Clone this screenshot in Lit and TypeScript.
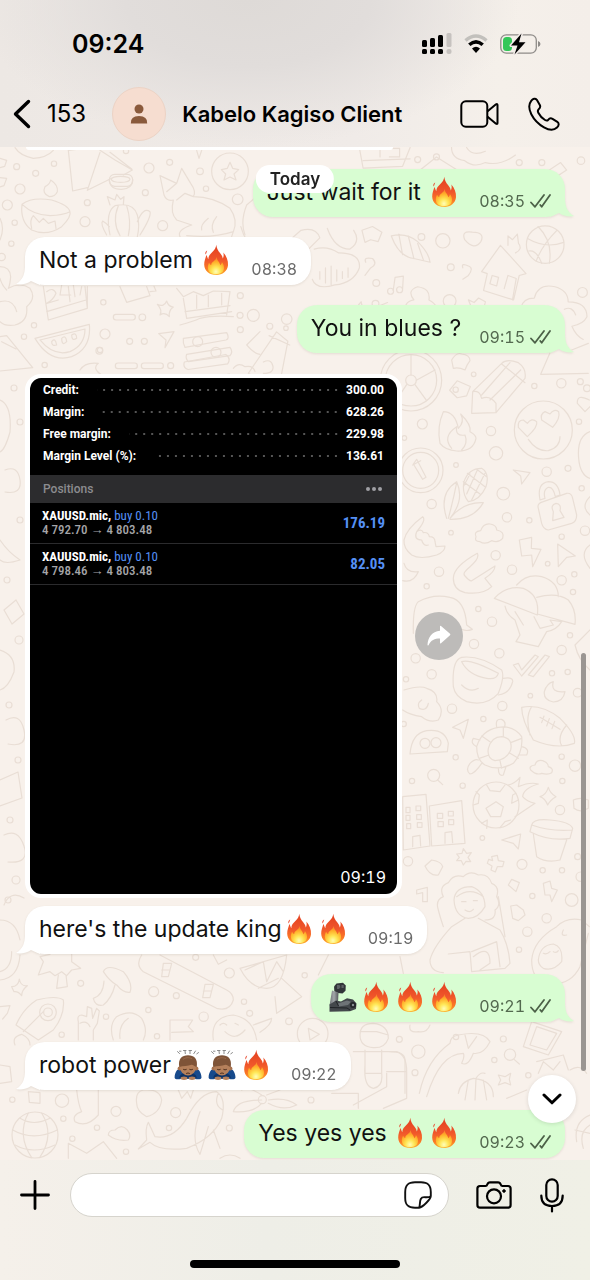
import { LitElement, html, svg, css, nothing } from "lit";
import { customElement, property } from "lit/decorators.js";

type Part = string | { emoji: string };
interface Message {
  out: boolean;
  time: string;
  parts: Part[];
  continued?: boolean;
}

const fire = { emoji: "fire" };
const arm = { emoji: "arm" };
const bow = { emoji: "bow" };

const before: Message[] = [
  { out: true, time: "08:35", parts: ["Just wait for it ", fire] },
  { out: false, time: "08:38", parts: ["Not a problem ", fire] },
  { out: true, time: "09:15", parts: ["You in blues ?"] },
];
const after: Message[] = [
  { out: false, time: "09:19", parts: ["here's the update king", fire, fire] },
  { out: true, time: "09:21", parts: [arm, fire, fire, fire] },
  { out: false, time: "09:22", parts: ["robot power", bow, bow, fire] },
  { out: true, time: "09:23", parts: ["Yes yes yes ", fire, fire], continued: true },
];

const emojiArt: Record<string, { label: string; art: unknown }> = {
  fire: {
    label: "fire",
    art: svg`
      <defs>
        <linearGradient id="outer" x1="0" y1="0" x2="0" y2="1">
          <stop offset="0" stop-color="#e2401f" /><stop offset=".5" stop-color="#f0562b" />
          <stop offset=".8" stop-color="#fb7a25" /><stop offset="1" stop-color="#fdb32c" />
        </linearGradient>
        <radialGradient id="inner" cx=".5" cy=".85" r=".75">
          <stop offset="0" stop-color="#fffdb8" /><stop offset=".35" stop-color="#ffe757" />
          <stop offset=".75" stop-color="#ffb02a" /><stop offset="1" stop-color="#fb8a2a" />
        </radialGradient>
      </defs>
      <path fill="url(#outer)" d="M17.3 .8C17.6 4.500 19 6.500 21 9C22.600 11 23.600 12.500 23.700 14.600C24.800 13 24.900 10.500 24.300 8.500C27.500 12 29.300 16.500 29 21.300C28.500 27 23.700 31 17.300 31C10.500 31 5.400 27.300 5.200 20.800C5.100 17 6.700 14 7.300 11C8.300 12.500 8.500 14 9.300 15.200C9.300 12 11.300 10 13.600 7.800C15.600 5.800 17 3.800 17.300 .8Z" />
      <path fill="#e8442b" d="M8.200 6.500C6.400 7.500 5.900 9.100 6.700 10.400C7.500 9.200 7.600 7.900 8.200 6.500Z" />
      <path fill="url(#inner)" d="M17.700 13C18 17 20.600 17.600 21.300 21.200C22.300 20.500 22.800 19.400 22.900 18C25.300 21 26 25.500 23.300 28.300C20 30.900 13.800 30.900 10.700 28.200C8.200 25.500 8.500 21.500 10.100 18.700C10.600 19.900 11.300 20.700 12.200 21C12.300 17.500 17 17 17.700 13Z" />`,
  },
  arm: {
    label: "mechanical arm",
    art: svg`
      <defs>
        <linearGradient id="metal" x1="0" y1="0" x2="1" y2="0">
          <stop offset="0" stop-color="#6c7073" /><stop offset=".5" stop-color="#a3a7aa" /><stop offset="1" stop-color="#54585b" />
        </linearGradient>
      </defs>
      <path fill="#323539" d="M9 5.500L11.500 2.600L18 1.800L20.800 4.500L20.500 9.800L17.500 12.400L13 12L9.400 10.500Z" />
      <path fill="#5d6165" d="M12 4h2.500l1 2-1.500 2h-2zM16.500 4h2.200v3h-2.200z" />
      <path fill="url(#metal)" d="M7 9.500L13.500 11.500L13 21.500L4.500 24.500Z" />
      <path fill="#43474b" d="M4.500 23.500L11 19.500L16 20.500L22 17.300L28 18.500L31.500 22.500L31 28L25 30.300L4.500 30.800Z" />
      <path fill="#6e7377" d="M13 22.500L22 19.600L26 20.800L23 24L14 25.500Z" />
      <circle cx="28" cy="24" r="3" fill="#23262a" /><circle cx="28" cy="24" r="1.200" fill="#8a8f93" />
      <path fill="none" stroke="#202326" stroke-width="1" d="M5 26.500L22 27L25 29M11 20L13.500 25" />`,
  },
  bow: {
    label: "person bowing",
    art: svg`
      <path fill="none" stroke="#8b8b8b" stroke-width="1" stroke-linecap="round" d="M8.500 4.500L6.500 2.600M8.500 2.200L10 2.200M14 1.800L14.300 4.600M12.500 1.500H15M19 1.800L19 4.600M18 1.500H20.500M24.500 2L22.800 4.600M27.500 3.600L25.800 4.800" />
      <path fill="#174a8c" d="M3.600 28.500C3.800 22.500 7 18.700 12 18.500H22C27 18.700 30.200 22.500 30.500 28.500C30.500 30.300 27.500 30.800 24 30H10C6.500 30.800 3.600 30.300 3.600 28.500Z" />
      <path fill="#0e3265" d="M8 28.800C9.500 25 12 23.800 17 23.800S24.500 25 26 28.800Z" />
      <circle cx="8.600" cy="19.500" r="2" fill="#a87350" /><circle cx="25.400" cy="19.500" r="2" fill="#a87350" />
      <ellipse cx="17" cy="17.300" rx="8.300" ry="9.200" fill="#b5805b" />
      <path fill="#7f5438" d="M8.300 18C6.800 10 11 6.300 17 6.300S27.200 10 25.700 18C23.500 17.600 22.500 16 20.500 15.800C17 17.500 12 16.500 8.300 18Z" />
      <path fill="none" stroke="#9a6a4a" stroke-width="1" d="M12 10.500C14 8.500 18 8 21 9.800" />
      <path fill="none" stroke="#4d2f1e" stroke-width="1" stroke-linecap="round" d="M12.500 20.500Q14 21.500 15.300 20.500M18.700 20.500Q20 21.500 21.500 20.500M15.500 24.300Q17 23.500 18.500 24.300" />
      <ellipse cx="13" cy="29.300" rx="3.400" ry="1.700" fill="#b5805b" /><ellipse cx="21" cy="29.300" rx="3.400" ry="1.700" fill="#b5805b" />`,
  },
};

@customElement("emoji-glyph")
export class EmojiGlyph extends LitElement {
  @property() name = "fire";
  static styles = css`
    :host { display: block; width: 34px; height: 32px; }
    svg { display: block; width: 100%; height: 100%; }
  `;
  render() {
    const e = emojiArt[this.name];
    return html`<svg viewBox="0 0 34 32" role="img" aria-label=${e.label}>${e.art}</svg>`;
  }
}

@customElement("chat-wallpaper")
export class ChatWallpaper extends LitElement {
  static styles = css`
    :host { display: block; }
    svg { display: block; width: 100%; height: 100%; fill: none; stroke: #e9ded5; stroke-linecap: round; stroke-linejoin: round; }
  `;
  private dots(list: number[][]) {
    return list.map(([x, y, r]) => svg`<circle cx=${x} cy=${y} r=${r} />`);
  }
  render() {
    return html`<svg viewBox="0 147 590 1013" preserveAspectRatio="xMidYMin slice" aria-hidden="true">
      <g transform="translate(0 145) scale(.33333)" stroke-width="3.600">
        ${this.dots([
          [50, 65, 9], [107, 85, 9], [162, 56, 8], [60, 132, 15], [22, 180, 15], [44, 233, 8], [262, 173, 9], [255, 230, 15], [447, 69, 15], [436, 143, 9],
          [509, 52, 9], [600, 79, 10], [618, 131, 8], [713, 163, 16], [488, 242, 15], [34, 296, 8], [5, 336, 11], [310, 472, 8], [427, 517, 10], [102, 541, 8],
          [72, 575, 8], [315, 567, 15], [389, 589, 9], [433, 589, 9], [300, 615, 8], [134, 660, 8], [512, 662, 9], [721, 452, 9], [760, 511, 18], [721, 554, 9], [378, 18, 8],
        ])}
        <path d="M45 8Q60 32 100 40Q140 38 160 16M205 16L218 138L262 128M205 16L240 12M262 136L300 22M262 136L335 100M300 16L345 45L397 75L370 90M330 22L395 72" />
        <rect x="328" y="88" width="70" height="36" rx="16" /><ellipse cx="362" cy="103" rx="28" ry="9" /><path d="M328 104Q330 134 365 133Q398 130 398 104" />
        <circle cx="690" cy="79" r="55" /><path d="M690 52L698 70L716 74L702 87L708 105L690 96L672 105L677 87L664 74L682 70Z" />
        <path d="M66 178Q60 230 95 255Q140 275 185 245Q215 215 210 200Q205 180 155 165Q95 155 66 178ZM66 178Q100 210 150 212Q190 210 210 200M148 155Q125 145 135 125Q150 118 152 105Q175 120 172 140Q165 155 148 155M95 250Q88 225 100 212L118 232L130 220L145 235L165 228L168 250" />
        <path d="M330 270Q315 200 345 182Q400 170 412 210Q420 240 412 275M355 182Q335 230 360 272M380 182Q395 230 385 272M320 270Q300 235 308 228Q320 235 328 245M412 230Q430 185 450 200Q455 215 420 270M330 180L322 155L345 165L350 148L362 163L372 155L370 178" />
        <path d="M480 92L530 115L545 70L572 115Q590 140 580 155Q640 155 690 190Q715 225 700 260L695 275M480 92L492 150Q500 170 520 165Q510 205 530 225L575 240Q530 255 540 275M530 115L500 140M580 155L555 145L530 165M625 220Q600 240 605 255M650 215Q630 240 640 262M700 260Q640 280 560 272" />
        <path d="M775 150L740 180Q720 230 735 270M0 220Q15 250 0 285M0 40L20 46L14 64L0 68M0 98L20 100L12 122L0 126M590 16L597 40L605 16" />
        <path d="M0 365Q30 365 32 395Q30 420 25 430Q60 410 90 430Q110 460 80 485Q85 530 45 540Q15 545 0 530M0 470Q40 460 50 500M20 435Q5 420 0 400" />
        <path d="M130 425L145 525L262 490V425M140 500L258 465M255 425L262 490M140 440Q160 425 168 445Q160 465 140 475L175 465M185 420L180 450L212 450M205 425L210 470M220 420L225 455M245 425L240 450" />
        <path d="M360 425L380 472L450 452L440 425M450 440L468 438L462 424M472 478Q492 488 500 468Q505 485 520 486Q505 497 508 515Q495 500 480 510Q488 495 472 478Z" />
        <path d="M530 430L550 455L580 440L610 452L640 438L690 440M550 460L560 520M690 440L680 510M555 500L690 482M560 520L695 500M540 540Q580 530 600 520Q640 510 700 515M590 450V490M625 450V485M665 445V480" />
        <rect x="340" y="508" width="66" height="17" rx="8" /><rect x="346" y="654" width="66" height="17" rx="8" /><rect x="424" y="654" width="66" height="17" rx="8" />
        <path d="M105 580L268 538Q275 610 215 635Q150 655 105 580ZM120 585L255 552Q255 600 210 620Q160 635 120 585M155 590Q165 575 170 600Q155 605 155 590M185 580Q198 568 200 590Q185 605 185 580M215 570Q230 560 230 580Q215 590 215 570M0 575L20 572L98 668L0 678M5 590Q25 600 48 612" />
        <path d="M476 566L522 560L495 608L498 585ZM550 580L680 563Q690 580 678 585L555 607Q548 595 550 580M560 628L690 607Q700 620 690 632L565 650Q555 640 560 628" /><circle cx="593" cy="590" r="15" /><circle cx="648" cy="622" r="15" />
        <path d="M240 675Q255 650 295 655Q275 670 305 690M780 560L740 600Q760 625 780 628M700 670Q715 650 735 665Q760 660 765 680" />
      </g>
      <g transform="translate(0 140) scale(.37627)" stroke-width="3.200">
        ${this.dots([
          [1110, 52, 8], [1160, 45, 8], [1380, 60, 8], [1410, 103, 14], [1440, 60, 8], [1544, 55, 10], [1120, 258, 9], [1177, 268, 19], [1198, 338, 9], [1195, 428, 17],
          [1548, 405, 13], [1000, 380, 9], [998, 435, 9], [876, 461, 8], [762, 476, 14], [717, 495, 8], [638, 466, 8], [1480, 470, 9], [264, 560, 9], [470, 670, 9], [760, 500, 6], [1560, 660, 9],
        ])}
        <path d="M955 20L965 75L1070 70L1090 20M965 55L1090 50M1010 20V45M1040 22H1062V45H1035M1110 85L1160 45L1215 80M1200 20Q1200 50 1235 55Q1260 75 1290 60Q1330 70 1370 40M1240 20Q1255 45 1290 30M1475 100L1460 80L1490 60L1506 80ZM640 230Q660 300 720 310L800 240Q840 230 850 260L790 320M870 235Q890 290 930 290Q960 270 940 240" />
        <path d="M1040 255Q1080 245 1110 270Q1140 300 1143 325L1100 315Q1060 310 1040 255M1060 250L1070 305M1085 255L1100 315M1110 275L1125 318M835 290Q870 280 900 300Q960 300 955 340Q940 380 890 385Q840 400 830 370M850 350V370M865 340V380M880 335V385M895 345V375M910 350V368M925 340V365" />
        <path d="M1235 265Q1225 240 1255 245Q1290 245 1278 270Q1260 295 1235 265M962 240L990 230L1015 245L1005 270L985 265L970 272Z" />
        <path d="M1280 350L1330 280L1398 355L1380 360L1365 425L1285 400L1295 355ZM1340 395L1350 360L1372 368L1362 425M1308 360L1325 365L1320 388L1302 382ZM1350 280L1350 255L1362 265L1375 250L1378 275Q1390 290 1370 300" />
        <circle cx="1449" cy="278" r="50" /><path d="M1402 262Q1450 290 1498 272M1430 230Q1470 270 1460 327M1480 240Q1440 280 1425 322M1405 295Q1425 290 1440 328" />
        <path d="M972 325Q965 310 990 315Q1005 330 985 340L970 360M1045 400L1050 365L1072 362L1070 395M1230 340Q1225 325 1245 335Q1260 340 1245 360L1230 370" /><circle cx="1038" cy="402" r="8" /><circle cx="1062" cy="398" r="8" />
        <path d="M1245 425L1260 432L1272 420L1290 430L1285 450L1293 465L1275 470L1262 460L1250 470L1255 450ZM1080 460Q1070 430 1100 425Q1080 400 1110 390Q1145 395 1140 425Q1170 440 1155 465Q1140 500 1110 480Q1080 500 1080 460ZM950 475Q940 450 960 430L965 455L990 450L985 475Q970 495 950 475M1010 475V440L1030 432M1385 445Q1390 420 1420 420Q1430 380 1475 390Q1510 400 1510 430Q1560 430 1560 470Q1550 490 1520 495Q1530 520 1550 530M1385 445Q1400 490 1440 480M1500 450Q1520 440 1530 465" />
        <path d="M660 620L735 510L765 535L740 665ZM800 480Q830 480 835 500M715 520L770 545M700 590Q720 580 725 600T700 620M490 590L600 570Q615 580 605 595L500 610Q485 605 490 590M500 640L610 622Q620 640 608 650L510 665Q495 655 500 640" />
        <path d="M1195 665L1215 640L1250 655L1240 680L1215 685Z" /><rect x="308" y="668" width="56" height="16" rx="8" /><rect x="374" y="668" width="56" height="16" rx="8" />
      </g>
      <g transform="translate(390 340) scale(.33333)" stroke-width="3.600">
        ${this.dots([
          [97, 252, 15], [197, 149, 8], [251, 103, 7], [303, 273, 14], [318, 340, 20], [433, 138, 8], [514, 130, 14], [571, 125, 9], [567, 245, 8], [43, 294, 7], [198, 375, 7],
          [470, 395, 14], [534, 385, 9], [340, 461, 19], [575, 445, 8], [125, 492, 14], [351, 532, 14], [418, 541, 8], [183, 578, 7], [585, 572, 14], [515, 590, 8], [317, 646, 14],
          [366, 689, 14], [473, 671, 7], [147, 695, 14], [110, 739, 8], [515, 721, 14], [553, 703, 8], [549, 756, 8], [265, 807, 8], [306, 845, 14], [252, 912, 14], [328, 940, 14],
          [540, 886, 8], [515, 930, 14], [77, 955, 14], [125, 1003, 14], [48, 1018, 8], [486, 1000, 8], [533, 996, 8], [421, 1067, 7], [186, 1106, 14], [337, 1098, 14], [280, 1137, 8], [563, 1058, 13],
        ])}
        <circle cx="63" cy="121" r="92" /><circle cx="63" cy="121" r="77" /><circle cx="63" cy="121" r="16" /><path d="M63 105V44M79 121L135 90M75 134L110 182M50 134L18 182" />
        <path d="M185 60Q200 35 215 42Q240 45 240 62Q230 75 225 90Q205 80 190 85Z" />
        <path d="M248 155L335 70Q350 55 385 68Q410 85 405 115L318 218L245 220ZM248 155Q270 150 275 175Q300 165 318 190L318 218M275 165L360 68M300 180L392 90M335 72L405 128" />
        <path d="M150 310Q140 260 160 215Q195 215 205 265Q225 245 212 222Q245 255 240 275Q258 285 258 295Q250 335 200 333Q165 330 150 310ZM185 325Q155 290 200 260Q195 290 225 285Q235 310 215 330" />
        <circle cx="460" cy="270" r="87" /><path d="M412 290L385 262Q382 240 400 240L412 250Q425 232 440 245Q445 260 412 290ZM488 262L455 240Q450 222 465 215L480 222Q492 205 506 215Q512 235 488 262ZM415 298Q440 335 475 332Q510 322 510 290" />
        <circle cx="92" cy="391" r="67" /><circle cx="92" cy="391" r="54" /><path d="M80 358L108 412L98 418L70 372ZM68 375L92 362" />
        <path d="M595 100L452 103L480 38M595 10L545 30M598 180Q560 160 562 190L585 215L600 200M600 275Q560 290 566 355Q570 405 600 415" />
        <path d="M170 535Q145 460 200 425Q225 480 180 535Q220 485 280 488Q250 540 180 538M175 535Q190 480 200 428M222 425Q235 385 275 385Q300 400 288 440Q270 480 235 485Q215 460 222 425M232 400L285 440M220 425L270 462M260 388L290 410M245 480L285 400M230 462L262 390M220 440L240 402" />
        <path d="M370 390L420 398L395 432L392 408ZM450 480Q440 430 475 425Q505 425 510 465L496 470Q490 440 475 442Q458 450 465 475ZM445 505Q440 490 460 485L530 460Q545 458 548 475L560 525Q560 545 545 550L475 570Q460 568 455 550ZM490 515Q480 495 498 490Q515 492 510 512L522 532L488 542ZM600 470Q570 500 600 525" />
        <path d="M42 600Q50 565 98 530Q110 540 80 575Q95 565 100 578Q115 575 118 590Q135 590 135 605L138 620L165 618Q165 635 140 645Q90 660 65 645Q40 625 42 600M80 575Q70 600 95 600Q100 620 115 615M258 590Q250 575 272 572Q280 550 300 552Q320 555 320 570Q345 575 338 595Q325 610 305 602Q285 615 270 605Q252 605 258 590Z" />
        <path d="M190 715Q190 680 262 640Q270 655 240 680Q215 700 225 708Q240 725 245 722L315 678Q315 695 285 715L305 740Q280 765 225 758Q190 750 190 715M388 600L425 592L424 625L453 628L428 680L425 645L395 648ZM503 612L556 648L530 652L505 680ZM600 615Q565 640 600 685" />
        <path d="M313 775Q350 735 400 745Q450 765 442 825ZM380 735Q410 700 455 710Q505 725 505 770M440 772Q500 755 535 780Q560 810 555 853L442 822M345 798Q350 825 375 840L390 885L378 905L445 920L470 875Q500 870 515 845L480 840L490 855L450 865L432 830M375 815L400 855" />
        <path d="M42 670Q50 700 85 695Q70 730 38 722M70 880Q68 800 85 785Q130 760 180 772Q225 780 230 855L247 868Q230 875 215 868" />
        <path d="M190 1040Q185 960 215 952Q270 945 335 990Q345 1010 325 1060Q290 1100 230 1085Q195 1070 190 1040ZM215 965Q240 955 325 1000Q320 1020 290 1015Q235 1005 215 965M340 1015Q370 1010 368 1025Q360 1060 325 1065M215 1035Q240 1060 265 1045" /><path d="M370 975L385 970L395 990L435 945L445 950L395 1008ZM415 1005L465 945L478 950L430 1010ZM600 870L555 915Q565 960 600 990" />
        <path d="M490 1025Q480 1060 525 1055Q520 1085 490 1086Q460 1080 463 1055Q470 1030 490 1025ZM42 1050Q90 1035 110 1045Q145 1055 140 1085Q165 1110 145 1140Q120 1150 95 1130Q60 1125 38 1110M95 1080Q80 1090 88 1105Q110 1115 115 1090" />
      </g>
      <g transform="translate(390 700) scale(.33333)" stroke-width="3.600">
        ${this.dots([
          [41, 72, 8], [197, 172, 8], [66, 243, 8], [218, 257, 8], [515, 170, 8], [555, 197, 17], [517, 243, 8], [510, 330, 14], [277, 414, 7], [54, 484, 14], [396, 493, 15], [458, 511, 8],
          [516, 511, 8], [563, 470, 9], [427, 588, 8], [545, 600, 19], [470, 655, 14], [412, 695, 14], [387, 749, 8], [28, 1018, 9], [85, 1055, 20], [198, 1011, 8], [340, 1017, 9], [313, 1080, 8], [75, 1118, 9], [415, 1126, 8], [572, 530, 14],
        ])}
        <path d="M188 82L235 58L220 115L210 90ZM60 162Q65 100 110 92Q165 85 175 130L172 155ZM395 22Q455 10 510 55Q560 105 553 130Q500 150 430 120Q395 60 395 22M425 20Q405 50 420 105M530 75Q500 110 515 137M450 52L510 88M462 48L455 68M478 56L470 78M494 64L486 86" /><circle cx="105" cy="130" r="15" /><circle cx="138" cy="128" r="15" />
        <path d="M260 140Q275 90 325 82Q370 75 395 110Q400 155 370 190Q325 215 285 195Q260 180 260 140M295 145Q305 110 335 110Q370 115 362 150Q350 180 315 182Q290 175 295 145M300 125L275 108M340 110V82M362 128L395 115M360 160L385 175M330 182L335 205M297 165L268 175M320 80Q315 55 335 58Q350 65 343 82M395 140Q420 145 410 165L385 165M325 205Q325 230 340 225L348 200M275 190Q255 220 240 222Q225 210 240 190Q255 175 265 180M260 140Q240 130 250 115L270 120" />
        <circle cx="131" cy="226" r="18" /><path d="M143 240L158 254M422 210Q415 198 435 195Q440 178 458 182Q475 188 475 200Q492 205 485 218Q475 225 455 220Q440 227 422 210Z" />
        <circle cx="318" cy="315" r="69" /><path d="M318 305L340 320L332 350H302L288 325ZM290 255L300 272L330 275L345 255M250 315L265 310L268 285L258 275M385 300L365 310L368 285L378 280M275 370L292 360L290 385M330 383L345 365L362 360M355 255Q375 250 390 232L385 260Q420 245 445 252Q400 265 398 290Q410 305 435 310L375 350M450 290Q468 285 475 262Q480 280 498 290Q480 300 473 315Q465 295 450 290Z" />
        <path d="M40 450L38 290L108 283L120 438ZM125 438L118 318L215 302L225 430ZM68 440V410L90 406L92 438M165 430V398L185 395L188 428" />
        <path d="M48 322H60V338H48ZM78 318H92V332H78ZM48 346H60V361H48ZM80 344H94V358H80ZM50 371H62V386H50ZM82 368H96V382H82ZM142 340H158V355H142ZM175 334H190V348H175ZM144 365H160V380H144ZM176 359H191V374H176Z" />
        <path d="M425 375Q430 355 480 360Q540 365 548 385L540 415Q480 425 420 395ZM425 375Q480 395 547 390M430 402L440 470Q470 490 510 480L530 420M335 420L392 402L385 447L370 430ZM550 300Q570 290 595 300V325Q570 340 552 325Z" />
        <path d="M200 462L216 460L220 446L230 460L244 458L234 472L242 485L228 484L220 495L214 482L200 482L208 472ZM305 470L322 466L325 482L342 485L338 500L322 500L316 516L303 510L306 498L292 490L296 478L308 482ZM105 498L125 480Q155 485 158 500L145 525Q120 530 105 498M355 555L365 538L388 548L378 575ZM460 550L480 543L485 565L502 570L485 605L480 585L465 585ZM362 618L380 615L400 630L405 645L385 662L368 655ZM80 570L112 562L112 605H98V578L80 582Z" />
        <path d="M160 680Q150 650 145 630Q135 600 160 590Q145 560 175 548Q190 520 220 530Q240 510 265 525Q295 520 305 550Q330 560 320 590Q335 615 315 630Q320 660 285 660M192 600Q195 560 245 560Q285 575 285 620Q265 655 235 655Q195 650 192 600ZM200 590Q240 560 280 590M215 605H228M250 602H262M225 630Q240 640 250 628M120 780Q130 740 185 680L225 655M265 655L330 690Q355 730 360 790L345 805L245 815L240 755L175 762M325 590L345 710M245 755L320 725L330 800M250 770Q300 730 300 790L270 810M120 780Q120 815 160 818" />
        <path d="M425 780Q430 720 500 680Q530 650 575 660L598 680M425 780Q425 840 470 850M595 700L570 800Q540 860 470 850M445 780Q450 735 490 732Q520 740 515 785Q490 815 460 805Q445 795 445 780M460 760Q470 765 480 755M490 755Q500 760 505 752M520 690Q510 710 530 705M40 730L30 650M30 770L40 820" />
        <path d="M88 1180Q110 1080 180 1030Q180 1010 205 1005Q280 990 300 1025Q280 1065 250 1060Q235 1100 215 1090Q225 1070 220 1060Q150 1060 110 1190M225 1005L235 1045L260 1010M60 975Q55 1000 85 995Q110 1000 120 975M400 1040L425 965L515 995L475 1065ZM420 1035L440 980L500 1000L470 1050ZM440 1085L520 1065L535 1110M445 1120L460 1085L490 1110L510 1085" /><circle cx="360" cy="1064" r="17" /><path d="M372 1078L388 1092" />
        <path d="M205 1180Q210 1145 250 1135Q310 1140 310 1190M235 1140L225 1200M258 1135L255 1200M280 1140L290 1200M258 1135Q270 1115 285 1120M325 1125L345 1130L362 1120L358 1138L362 1155L345 1148L325 1155L332 1140ZM0 1055Q45 1055 45 1080V1180M540 1110Q570 1090 590 1120" />
      </g>
      <g transform="translate(0 945) scale(.33333)" stroke-width="3.600">
        ${this.dots([
          [242, 115, 9], [318, 215, 8], [461, 140, 15], [445, 195, 8], [529, 152, 9], [587, 37, 9], [688, 84, 15], [732, 170, 8], [749, 205, 9], [914, 91, 8], [867, 229, 10], [611, 215, 14],
          [185, 269, 8], [471, 274, 8], [37, 464, 8], [186, 467, 20], [190, 521, 8], [291, 548, 8], [217, 581, 8], [348, 499, 15], [527, 503, 15], [507, 549, 8], [378, 620, 8], [688, 549, 9], [933, 465, 9],
        ])}
        <path d="M0 105Q55 100 60 30M0 80Q35 70 35 20M35 125Q55 125 58 102Q62 125 82 122Q65 135 65 152Q55 138 42 140ZM115 90L130 50L120 35L150 28M115 90L150 80L165 92L185 80L200 92L215 75L242 70L215 50L215 28M175 90L170 130L202 125L198 90M310 80Q320 55 370 80Q400 115 390 142Q370 145 350 120Q330 110 310 80ZM312 108Q310 150 280 160Q285 185 310 180Q335 160 345 120" />
        <path d="M425 30Q405 60 430 80L650 190Q690 200 700 165Q700 145 680 135L480 30M490 55H515L505 95H485ZM615 118H640L630 158H608ZM485 75H510M610 138H635M720 70L860 30M720 70Q750 130 800 130Q850 130 860 30M735 75L790 50L800 110L830 50L850 80M775 130L835 100M845 100L905 155L830 205L825 155M640 30L655 58L680 45M985 30L955 90" />
        <path d="M48 240Q70 190 110 165Q170 150 190 165Q195 210 160 255L115 285ZM70 260L130 200" /><circle cx="144" cy="202" r="25" /><circle cx="144" cy="202" r="13" />
        <path d="M0 185L30 182L22 205L8 222M45 300Q35 275 65 268Q90 280 90 300M235 285V230Q230 210 245 210L260 215L262 185L275 190L278 220L290 190L298 198L292 235L280 255V285M240 235Q260 225 270 245M510 285V225H578L565 245L580 260L515 262M340 285Q325 240 350 215Q395 190 425 220Q445 255 430 285M360 280Q355 240 385 220M640 285Q630 215 700 210Q760 220 770 285M660 240Q670 230 680 240M705 235L715 240M675 260Q705 290 735 255M760 240L815 220Q815 240 780 262" />
        <circle cx="938" cy="266" r="46" /><path d="M925 250L958 268L930 285Z" /><path d="M0 360L30 365L35 410L0 415M85 440L120 443V475L88 472ZM230 435Q235 480 245 500Q215 510 225 530Q260 550 295 510V435M410 475Q405 440 430 435Q480 430 485 465Q480 505 440 515Q410 500 410 475M535 435L545 460L562 440L572 460L580 435M325 570Q325 555 345 555Q365 535 382 555Q395 570 385 585Q350 590 325 570Z" />
        <circle cx="105" cy="570" r="69" /><path d="M38 555Q100 590 172 555M45 600Q100 630 165 600M85 504Q50 570 95 638M125 504Q165 570 120 636M60 520Q100 545 150 520" /><path d="M415 612L440 585Q435 550 445 532L465 575Q520 585 560 520Q600 440 650 440Q680 460 665 520Q640 580 560 610Q480 620 450 592ZM600 500Q570 580 600 628L625 545M640 555L660 610M655 445Q640 480 668 495M205 640V595L260 625L310 590L350 640M660 640Q690 620 720 640" />
        <path d="M785 450Q740 420 725 435M785 465Q710 465 700 500Q760 505 785 475M800 450L840 435M805 465Q860 455 890 480Q850 500 805 475" /><circle cx="787" cy="464" r="12" />
      </g>
      <g transform="translate(320 1015) scale(.33333)" stroke-width="3.600">
        <path d="M120 60Q120 25 160 25Q205 30 205 70Q195 100 160 98Q120 95 120 60M120 50L170 50L205 60M100 110H230Q260 120 260 170V250L190 280M135 105V175H185V105M135 150Q130 215 160 220Q190 215 185 175M35 235H115V280M100 270L200 215V175M200 170H260M560 250L620 225M770 380Q760 320 810 300M765 345L810 355M790 400Q775 350 810 330" />
      </g>
      <g stroke-width="1.200">
        <path d="M0 400Q12 405 10 432Q5 450 0 452M5 470Q18 465 20 480T5 492M0 540Q8 552 20 560Q5 565 0 560M4 610L16 600L24 614L12 624ZM0 650Q16 655 14 672Q8 688 0 690M6 720Q20 712 24 730T8 744M0 780L18 772L22 798L0 806M4 835Q18 828 24 846T8 862" />
        ${this.dots([[14, 388, 3], [20, 520, 3], [7, 580, 3], [19, 640, 4], [9, 705, 3], [18, 760, 3], [10, 820, 3], [16, 880, 4], [8, 900, 3], [20, 422, 3]])}
        <path d="M0 920Q16 920 20 940M4 905Q10 890 24 898" />
      </g>
    </svg>`;
  }
}

@customElement("chat-bubble")
export class ChatBubble extends LitElement {
  @property({ attribute: false }) message!: Message;
  static styles = css`
    :host { display: flex; }
    .bubble {
      position: relative; display: flex; align-items: center; gap: 18px; box-sizing: border-box;
      min-height: 48px; padding: 0 14px; border-radius: 20px; background: #fff; color: #111;
      filter: drop-shadow(0 1px 1px rgba(90, 70, 50, 0.12));
    }
    .out { margin-left: auto; background: #d8fdd2; }
    .text { display: flex; align-items: center; flex-wrap: wrap; padding-bottom: 2px; font-size: 23px; line-height: 44px; white-space: pre-wrap; }
    .meta { display: flex; align-items: center; gap: 5px; align-self: flex-end; font-size: 16px; font-variant-numeric: tabular-nums; line-height: 20px; padding-bottom: 6px; color: #6b6b6b; }
    .out .meta { color: #53694f; }
    .ticks { width: 21px; height: 14px; }
    .tail { position: absolute; bottom: 0; left: -9px; width: 24px; height: 20px; fill: #fff; }
    .out .tail { left: auto; right: -9px; fill: #d8fdd2; transform: scaleX(-1); }
  `;
  render() {
    const m = this.message;
    return html`<div class="bubble ${m.out ? "out" : ""}">
      ${m.continued ? nothing : html`<svg class="tail" viewBox="0 0 24 20" aria-hidden="true"><path d="M9 0C9 9 7 15 0 19C5 20 11 19 15 16L24 20V0Z" /></svg>`}
      <span class="text">${m.parts.map((p) => (typeof p === "string" ? html`<span>${p}</span>` : html`<emoji-glyph name=${p.emoji}></emoji-glyph>`))}</span>
      <span class="meta"><time>${m.time}</time>${m.out
        ? html`<svg class="ticks" viewBox="0 0 21 14" fill="none" stroke="#4c6148" stroke-width="1.800" stroke-linecap="round" stroke-linejoin="round" role="img" aria-label="Delivered"><path d="M1 8.500L5 12.800L14 1M10.300 11L11.700 12.800L20 1" /></svg>`
        : nothing}</span>
    </div>`;
  }
}

@customElement("trade-card")
export class TradeCard extends LitElement {
  static styles = css`
    :host { display: block; }
    .card { display: flex; flex-direction: column; box-sizing: border-box; min-height: 524px; border: solid #fff; border-width: 4px 5px; border-radius: 16px; background: #000; color: #fff; font-family: Roboto, "Liberation Sans", sans-serif; overflow: hidden; }
    .summary { margin: 0; padding: 1px 0 8px; }
    .row { display: flex; align-items: center; padding: 0 13px; font-size: 12px; line-height: 22px; font-weight: 700; }
    .row dd { margin: 0; }
    .leader { flex: 1; height: 2px; margin: 0 6px 0 18px; background: radial-gradient(circle, #555 1px, transparent 1px) right center / 8px 2px repeat-x; }
    .bar { display: flex; justify-content: space-between; align-items: center; padding: 0 15px 0 13px; height: 28px; background: #2c2c2e; color: #8c8c90; }
    h2 { margin: 0; font-size: 12px; font-weight: 500; }
    .more { display: flex; border: 0; padding: 0; background: none; }
    ul { margin: 0; padding: 0; list-style: none; }
    li { display: flex; align-items: center; justify-content: space-between; box-sizing: border-box; height: 41px; padding: 0 12px; border-bottom: 1px solid #2b2b2d; font-size: 13px; line-height: 14px; font-family: "Roboto Condensed", Roboto, sans-serif; }
    .buy, .profit { color: #5590f5; }
    .symbol { font-weight: 700; }
    .range { color: #a5a5a8; font-weight: 500; }
    .profit { font-size: 15px; font-weight: 700; }
    .time { margin: auto 11px 6px auto; font: 16px/22px Inter, "Liberation Sans", sans-serif; font-variant-numeric: tabular-nums; }
  `;
  render() {
    const rows = [["Credit:", "300.00"], ["Margin:", "628.26"], ["Free margin:", "229.98"], ["Margin Level (%):", "136.61"]];
    const positions = [["4 792.70", "4 803.48", "176.19"], ["4 798.46", "4 803.48", "82.05"]];
    return html`<div class="card">
      <dl class="summary">${rows.map(([k, v]) => html`<div class="row"><dt>${k}</dt><span class="leader"></span><dd>${v}</dd></div>`)}</dl>
      <div class="bar"><h2>Positions</h2><button class="more" aria-label="More"><svg width="16" height="6" viewBox="0 0 16 6" fill="#a0a0a4"><circle cx="2" cy="3" r="2" /><circle cx="8" cy="3" r="2" /><circle cx="14" cy="3" r="2" /></svg></button></div>
      <ul>${positions.map(([a, b, p]) => html`<li><div><div><span class="symbol">XAUUSD.mic,</span> <span class="buy">buy 0.10</span></div><div class="range">${a} → ${b}</div></div><span class="profit">${p}</span></li>`)}</ul>
      <time class="time">09:19</time>
    </div>`;
  }
}

@customElement("app-root")
export class AppRoot extends LitElement {
  static styles = css`
    :host { display: flex; flex-direction: column; min-height: 100vh; font-family: Inter, "Liberation Sans", sans-serif; color: #000; background: #f7f1ea; }
    button { border: 0; padding: 0; background: none; color: inherit; font: inherit; display: flex; align-items: center; justify-content: center; }
    svg { display: block; }
    header { background: radial-gradient(ellipse 46% 100% at 42% 0, #dedad7 0, #e1dddb 45%, rgba(235, 230, 227, 0) 100%), linear-gradient(90deg, #ede8e4, #f0ebe8 60%, #f5f0ea 85%, #f4eee9); }
    .status { display: flex; justify-content: space-between; align-items: center; box-sizing: border-box; height: 80px; padding: 8px 49px 0 72px; font-size: 25px; font-weight: 600; }
    .signals { display: flex; align-items: center; gap: 12px; }
    .nav { display: flex; align-items: center; height: 67px; padding: 0 30px 0 13px; }
    .back { gap: 16px; font-size: 24px; }
    .avatar { display: flex; align-items: center; justify-content: center; box-sizing: border-box; width: 54px; height: 54px; margin: 0 16px 0 26px; border-radius: 50%; border: 1px solid #ecd3c5; background: #f6ddd0; }
    h1 { flex: 1; margin: 0; font-size: 22px; font-weight: 600; white-space: nowrap; }
    .calls { display: flex; align-items: center; gap: 29px; }
    main { position: relative; flex: 1; overflow: hidden; background: #f8f1eb; }
    chat-wallpaper { position: absolute; inset: 0; }
    .previous { position: absolute; top: 0; left: 26px; width: 367px; height: 3px; background: #fff; border-radius: 0 0 16px 16px; }
    .thread { position: relative; display: flex; flex-direction: column; gap: 20px; padding: 22px 25px 2px; }
    .group { display: flex; flex-direction: column; gap: 8px; padding-top: 1px; }
    .media { display: flex; align-items: center; gap: 13px; }
    trade-card { width: 377px; }
    .forward { width: 48px; height: 48px; border-radius: 50%; background: #bdbbb9; }
    .date { position: absolute; top: 18px; left: 50%; transform: translateX(-50%); padding: 0 14px; border-radius: 14px; background: #fff; font-size: 17px; line-height: 28px; font-weight: 600; color: #222; }
    .scrollbar { position: absolute; right: 4px; bottom: 89px; width: 5px; height: 418px; border-radius: 3px; background: #9b9692; }
    .latest { position: absolute; right: 14px; bottom: 37px; width: 48px; height: 48px; border-radius: 50%; background: #fff; box-shadow: 0 1px 4px rgba(0, 0, 0, 0.12); }
    footer { display: flex; flex-direction: column; align-items: center; justify-content: space-between; box-sizing: border-box; height: 120px; padding: 13px 0 12px; background: linear-gradient(90deg, #f5f0ea, #eeeee7 45%, #f0f0e6); }
    .composer { display: flex; align-items: center; align-self: stretch; padding: 0 26px 0 20px; }
    .field { display: flex; align-items: center; flex: 1; min-width: 0; box-sizing: border-box; height: 44px; margin: 0 27px 0 20px; padding: 0 16px 0 18px; border: 1px solid #d6d4cd; border-radius: 22px; background: #fff; }
    .field input { flex: 1; min-width: 0; border: 0; outline: 0; background: none; font: inherit; font-size: 23px; }
    .mic { margin-left: 28px; }
    .home { width: 210px; height: 8px; border-radius: 4px; background: #000; }
  `;

  render() {
    return html`
      <header>
        <div class="status">
          <time>09:24</time>
          <div class="signals">
            <svg width="30" height="22" viewBox="0 0 30 22" role="img" aria-label="Signal">
              <g fill="#000"><rect x="0" y="7" width="5" height="7" rx="1.500" /><rect x="8" y="5" width="5" height="9" rx="1.500" /><rect x="16" y="2" width="5" height="12" rx="1.500" /><rect x="0" y="16" width="5" height="5" rx="1.500" /><rect x="8" y="16" width="5" height="5" rx="1.500" /><rect x="16" y="16" width="5" height="5" rx="1.500" /></g>
              <g fill="#c6c2bf"><rect x="24.500" y="0" width="5" height="14" rx="1.500" /><rect x="24.500" y="16" width="5" height="5" rx="2" /></g>
            </svg>
            <svg width="24" height="20" viewBox="0 0 24 20" fill="none" role="img" aria-label="Wi-Fi">
              <path d="M1.500 6.500Q12 -2.500 22.500 6.500" stroke="#c2c0bc" stroke-width="3.400" />
              <path d="M5.300 10.800Q12 4.800 18.700 10.800" stroke="#000" stroke-width="3.500" />
              <path d="M8 14.500Q12 11.200 16 14.500L12 19Z" fill="#000" />
            </svg>
            <svg width="41" height="22" viewBox="0 0 41 22" role="img" aria-label="Battery charging">
              <rect x=".8" y="1.800" width="35.500" height="18.400" rx="5.500" fill="none" stroke="#8e8b88" stroke-width="1.300" />
              <path d="M38 8V14Q40.500 13 40.500 11T38 8Z" fill="#8e8b88" />
              <rect x="3" y="4" width="9" height="14" rx="3.500" fill="#34c759" />
              <path d="M21.500 .5L11 12.500H17.500L14.500 21.500L25.500 9.300H19Z" fill="#000" stroke="#f2ece8" stroke-width="3" paint-order="stroke" stroke-linejoin="round" />
            </svg>
          </div>
        </div>
        <nav class="nav">
          <button class="back" aria-label="Back, 153 unread"><svg width="18" height="30" viewBox="0 0 18 30" fill="none" stroke="#000" stroke-width="3.400" stroke-linecap="round" stroke-linejoin="round"><path d="M15.500 2.500L2.500 15L15.500 27.500" /></svg>153</button>
          <span class="avatar"><svg width="18" height="20" viewBox="0 0 18 20" fill="#8a5a3c"><circle cx="9" cy="5" r="4.500" /><path d="M.8 19.500Q.3 12 9 12T17.200 19.500Z" /></svg></span>
          <h1>Kabelo Kagiso Client</h1>
          <div class="calls">
            <button aria-label="Video call"><svg width="39" height="28" viewBox="0 0 39 28" fill="none" stroke="#000" stroke-width="2" stroke-linejoin="round"><rect x="1.300" y="1.300" width="26" height="25.400" rx="4.500" /><path d="M27.300 11.500L36 4.300Q37.500 3.500 37.500 5V23Q37.500 24.500 36 23.700L27.300 16.500" /></svg></button>
            <button aria-label="Voice call"><svg width="32" height="34" viewBox="0 0 32 34" fill="none" stroke="#000" stroke-width="2" stroke-linejoin="round"><path d="M3.200 3.800C5 1.500 7.300 1 8.800 2.800L11.800 8C12.700 9.800 12 11.200 10.700 12.300C9.500 13.400 9.600 14.300 10.300 15.700C11.800 18.600 14.200 21.300 17 23C18.300 23.800 19.300 23.900 20.200 22.800C21.300 21.400 22.800 20.900 24.500 21.800L29.300 24.800C31.300 26.300 31 28.600 29 30.500C25.800 33.500 21.200 33.200 16 30.300C10.500 27.200 6 22.500 3.300 17.200C1 12.500 .4 7.400 3.200 3.800Z" /></svg></button>
          </div>
        </nav>
      </header>
      <main>
        <chat-wallpaper></chat-wallpaper>
        <div class="previous"></div>
        <section class="thread" aria-label="Messages">
          ${before.map((m) => html`<chat-bubble .message=${m}></chat-bubble>`)}
          <div class="group">
            <div class="media">
              <trade-card></trade-card>
              <button class="forward" aria-label="Forward"><svg width="24" height="22" viewBox="0 0 24 22" fill="#fff"><path d="M13 1.500Q13 .2 14 1L23 8.800Q23.800 9.500 23 10.300L14 18.200Q13 19 13 17.700V13.500C7.500 13.500 4 15 1.500 20.200Q.5 21 .5 19.500C1 12.500 5 6.500 13 5.700Z" /></svg></button>
            </div>
            <chat-bubble .message=${after[0]}></chat-bubble>
          </div>
          ${after.slice(1).map((m) => html`<chat-bubble .message=${m}></chat-bubble>`)}
        </section>
        <div class="date">Today</div>
        <div class="scrollbar"></div>
        <button class="latest" aria-label="Scroll to latest"><svg width="20" height="12" viewBox="0 0 20 12" fill="none" stroke="#000" stroke-width="3" stroke-linecap="round" stroke-linejoin="round"><path d="M2 2L10 9.800L18 2" /></svg></button>
      </main>
      <footer>
        <div class="composer">
          <button aria-label="Attach"><svg width="30" height="30" viewBox="0 0 30 30" stroke="#000" stroke-width="2.800" stroke-linecap="round"><path d="M15 1.500V28.500M1.500 15H28.500" /></svg></button>
          <div class="field">
            <input type="text" aria-label="Message" />
            <button aria-label="Stickers"><svg width="28" height="28" viewBox="0 0 28 28" fill="none" stroke="#111" stroke-width="1.900" stroke-linejoin="round"><path d="M15 26.800H11C4 26.800 1.200 24 1.200 17V11C1.200 4 4 1.200 11 1.200H17C24 1.200 26.800 4 26.800 11V15C26.800 18 19 26 15 26.800ZM15 26.800C17 24 14 15.500 21 16.200C23.500 16.500 25.500 16.500 26.800 15" /></svg></button>
          </div>
          <button aria-label="Camera"><svg width="36" height="28" viewBox="0 0 36 28" fill="none" stroke="#000" stroke-width="2.200" stroke-linejoin="round"><path d="M4 5H9.500Q10.800 5 11.300 3.500Q12 1.300 14 1.300H22Q24 1.300 24.700 3.500Q25.200 5 26.500 5H32Q34.600 5 34.600 7.600V24Q34.600 26.700 32 26.700H4Q1.400 26.700 1.400 24V7.600Q1.400 5 4 5Z" /><circle cx="18" cy="15.300" r="7" /><circle cx="28" cy="10" r="1.300" fill="#000" stroke-width="1" /></svg></button>
          <button class="mic" aria-label="Voice message"><svg width="24" height="35" viewBox="0 0 24 35" fill="none" stroke="#000" stroke-width="2.200" stroke-linecap="round"><rect x="6.300" y="1.300" width="11.400" height="22.400" rx="5.700" /><path d="M1.300 17.500Q1.300 28 12 28T22.700 17.500M12 28V33.500" /></svg></button>
        </div>
        <div class="home"></div>
      </footer>
    `;
  }
}
